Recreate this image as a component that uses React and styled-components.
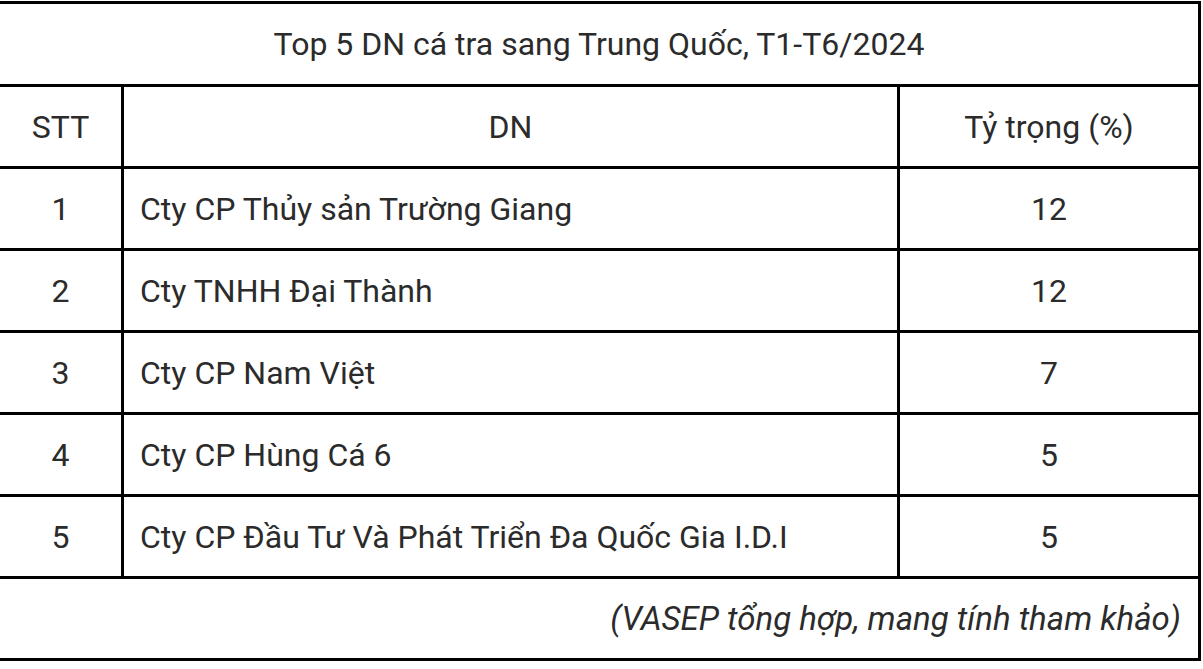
import React from 'react';
import styled, { createGlobalStyle } from 'styled-components';

const GlobalStyle = createGlobalStyle`
  html, body {
    margin: 0;
    padding: 0;
    background: #fff;
  }
  body {
    font-family: Roboto, "Noto Sans", "Liberation Sans", sans-serif;
    color: #2b2b2b;
    overflow: hidden;
  }
`;

const Wrap = styled.div`
  padding-top: 1px;
  margin-left: -3px;
  width: 1203px;
`;

const Table = styled.table`
  width: 1201px;
  border-collapse: collapse;
  table-layout: fixed;
  font-size: 32px;
  color: #2b2b2b;
`;

const Row = styled.tr`
  height: ${props => props.$h || 82}px;
`;

const Cell = styled.td`
  border: 3px solid #000;
  padding: 0 16px;
  text-align: ${props => props.$align || 'center'};
  vertical-align: middle;
  white-space: nowrap;
`;

const Note = styled(Cell)`
  font-style: italic;
  font-size: 33px;
  padding-right: 17px;
`;

const rows = [
  ['1', 'Cty CP Thủy sản Trường Giang', '12'],
  ['2', 'Cty TNHH Đại Thành', '12'],
  ['3', 'Cty CP Nam Việt', '7'],
  ['4', 'Cty CP Hùng Cá 6', '5'],
  ['5', 'Cty CP Đầu Tư Và Phát Triển Đa Quốc Gia I.D.I', '5'],
];

const App = () => (
  <>
    <GlobalStyle />
    <Wrap>
      <Table>
        <colgroup>
          <col style={{ width: '124px' }} />
          <col style={{ width: '776px' }} />
          <col style={{ width: '301px' }} />
        </colgroup>
        <tbody>
          <Row $h={83}>
            <Cell colSpan={3}>Top 5 DN cá tra sang Trung Quốc, T1-T6/2024</Cell>
          </Row>
          <Row>
            <Cell>STT</Cell>
            <Cell>DN</Cell>
            <Cell>Tỷ trọng (%)</Cell>
          </Row>
          {rows.map(r => (
            <Row key={r[0]}>
              <Cell>{r[0]}</Cell>
              <Cell $align="left">{r[1]}</Cell>
              <Cell>{r[2]}</Cell>
            </Row>
          ))}
          <Row>
            <Note colSpan={3} $align="right">
              (VASEP tổng hợp, mang tính tham khảo)
            </Note>
          </Row>
        </tbody>
      </Table>
    </Wrap>
  </>
);

export default App;
